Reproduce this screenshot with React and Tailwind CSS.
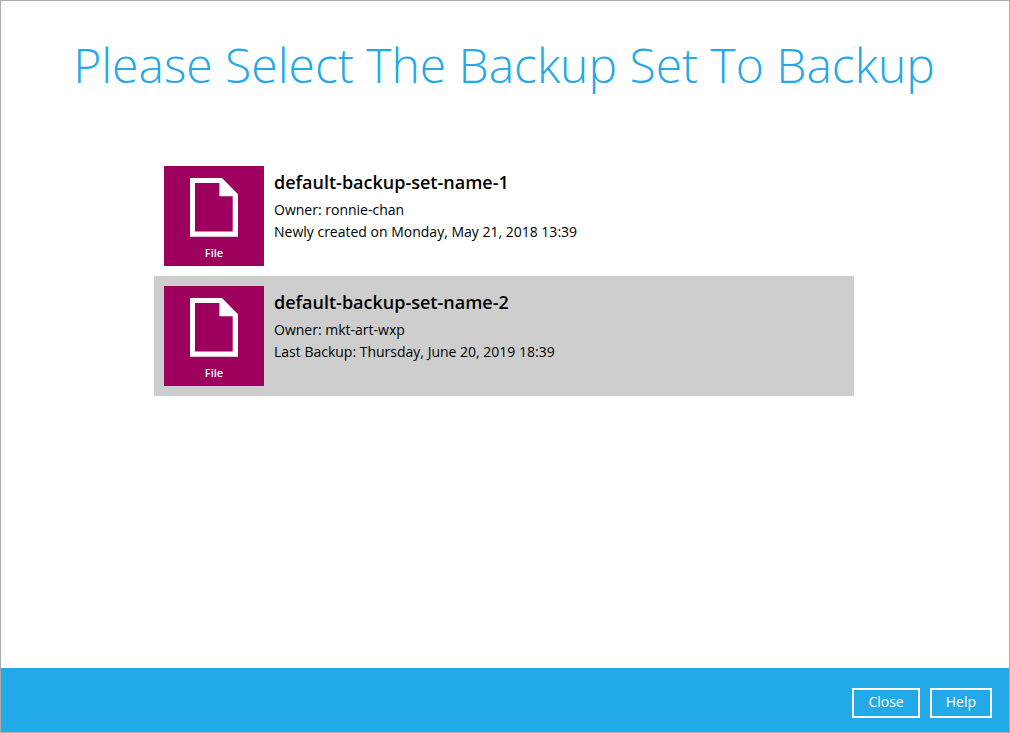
const sets = [
  { name: "default-backup-set-name-1", owner: "ronnie-chan", status: "Newly created on Monday, May 21, 2018 13:39", selected: false },
  { name: "default-backup-set-name-2", owner: "mkt-art-wxp", status: "Last Backup: Thursday, June 20, 2019 18:39", selected: true },
];

function FileTile() {
  return (
    <span className="flex size-[100px] shrink-0 flex-col items-center bg-[#9e005d] pt-3 text-white">
      <svg viewBox="0 0 48 60" className="h-[60px] w-12" fill="currentColor" aria-hidden="true">
        <path fillRule="evenodd" d="M0 0H32L48 16.3V58.7H0ZM5 5V53.4H42.7V18.3H29.4V5Z" />
      </svg>
      <span className="mt-[7px] text-[11px] leading-4 font-semibold">File</span>
    </span>
  );
}

function BackupSet({ set }) {
  return (
    <li>
      <button
        type="button"
        aria-pressed={set.selected}
        className={`flex w-full gap-[10px] p-[10px] text-left ${set.selected ? "bg-[#cecece]" : "bg-white"}`}
      >
        <FileTile />
        <span className="flex flex-col pt-[2px] text-sm leading-[22px] text-black">
          <span className="mb-[3px] text-lg leading-7 font-semibold">{set.name}</span>
          <span>Owner: {set.owner}</span>
          <span>{set.status}</span>
        </span>
      </button>
    </li>
  );
}

function FooterButton({ children }) {
  return (
    <button type="button" className="h-[30px] border-2 border-white px-[14px] pb-[2px] text-sm leading-6 font-medium text-white">
      {children}
    </button>
  );
}

export default function App() {
  return (
    <div className="flex min-h-screen flex-col border border-[#ababab] bg-white font-['Open_Sans',sans-serif]">
      <main className="flex grow flex-col items-center pr-[2px]">
        <h1 className="pt-[31px] text-center text-5xl leading-[66px] font-light text-[#22a9e8]">
          Please Select The Backup Set To Backup
        </h1>
        <ul className="mt-[58px] w-full max-w-[700px]">
          {sets.map((set) => (
            <BackupSet key={set.name} set={set} />
          ))}
        </ul>
      </main>
      <footer className="flex h-16 items-center justify-end gap-[10px] bg-[#22a9e8] px-[17px] pt-[5px]">
        <FooterButton>Close</FooterButton>
        <FooterButton>Help</FooterButton>
      </footer>
    </div>
  );
}
